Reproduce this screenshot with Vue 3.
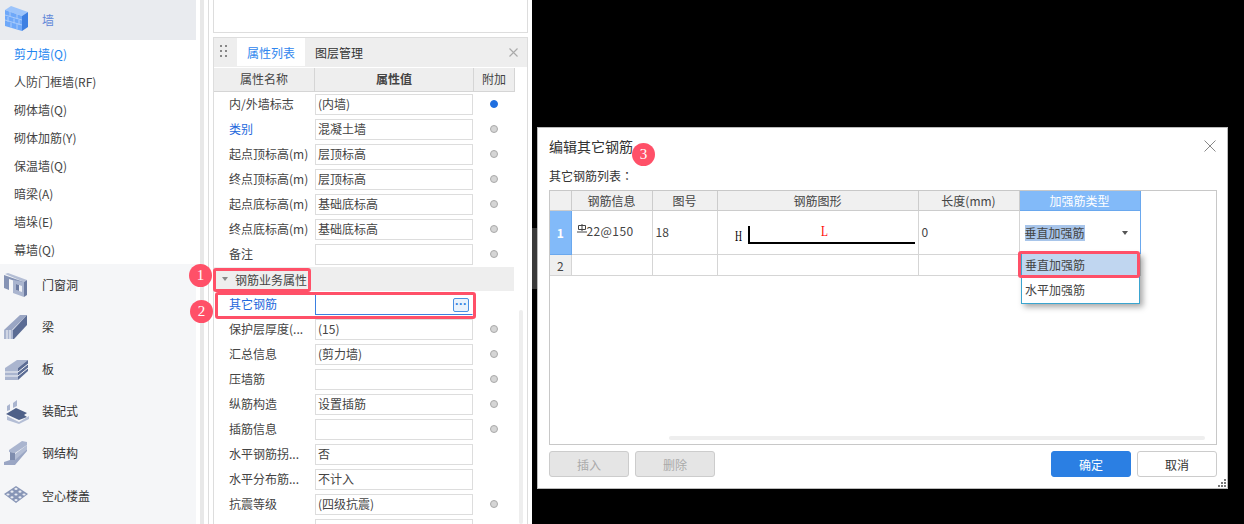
<template>
  <div class="app">
    <nav class="nav">
      <div class="nav-head nav-current">
        <svg class="nav-icon" viewBox="0 0 26 26">
          <polygon points="1,4 7,0 24,6 18,10" fill="#9cc4fb" />
          <polygon points="1,4 18,10 18,25 1,20" fill="#6ea8f9" />
          <polygon points="18,10 24,6 24,21 18,25" fill="#3d7fe2" />
          <path d="M1 9l17 5M1 14l17 5M6 5.500v5M13 8v5M4 11v5M10 12.500v5M15 14v5M7 16.500v5M13 18v5" stroke="#a9cbfb" stroke-width="1" fill="none" />
        </svg>
        <span>墙</span>
      </div>
      <ul class="sub-list">
        <li v-for="(s, i) in wallItems" :key="s" :class="{ active: i === 0 }">{{ s }}</li>
      </ul>
      <div class="nav-rest">
        <div class="nav-head">
          <svg class="nav-icon" viewBox="0 0 26 26">
            <g transform="translate(0 1)">
              <polygon points="1,1 4,0 23,7 20,9" fill="#b4bed5" />
              <polygon points="0,2 20,9 20,11 5,6 5,17 0,15" fill="#8593b5" />
              <polygon points="9,7 20,9 20,24 9,20" fill="#aab5cf" />
              <polygon points="20,9 23,7 23,22 20,24" fill="#6c7ba1" />
              <polygon points="12,11 18,13 18,19 12,17" fill="#eef0f5" />
              <polygon points="12,11 15,12 15,18 12,17" fill="#6c7ba1" />
            </g>
          </svg>
          <span>门窗洞</span>
        </div>
        <div class="nav-head">
          <svg class="nav-icon" viewBox="0 0 26 26">
            <polygon points="0,16 16,1 23,1 8,16" fill="#9aa6c4" />
            <polygon points="9,16 23,1 23,11 10,25 9,25" fill="#5b6c94" />
            <rect x="0" y="16" width="9" height="9" fill="#aab5cf" />
            <path d="M3 16v9M6 16v9" stroke="#f5f6f8" stroke-width="1" />
          </svg>
          <span>梁</span>
        </div>
        <div class="nav-head">
          <svg class="nav-icon" viewBox="0 0 26 26">
            <polygon points="1,12 14,12 24,4 13,4" fill="#aab5cf" />
            <polygon points="1,12 14,12 14,24 1,24" fill="#aab5cf" />
            <polygon points="14,12 24,4 24,15 14,24" fill="#5b6c94" />
            <path d="M1 16h13l10-8M1 20h13l10-8" stroke="#f5f6f8" stroke-width="1" fill="none" />
          </svg>
          <span>板</span>
        </div>
        <div class="nav-head">
          <svg class="nav-icon" viewBox="0 0 26 26">
            <polygon points="3,7 6,5 6,11 3,12" fill="#aab5cf" />
            <polygon points="9,4 13,1 13,7 9,9" fill="#aab5cf" />
            <polygon points="2,15 12,9 23,14 20,16 23,18 15,21" fill="#4e6088" />
            <polygon points="3,17 15,23 25,17 25,20 15,25 3,21" fill="#b4bed5" />
          </svg>
          <span>装配式</span>
        </div>
        <div class="nav-head">
          <svg class="nav-icon" viewBox="0 0 26 26">
            <polygon points="5,9 18,0 23,1 23,4 11,12 5,11" fill="#aab5cf" />
            <polygon points="6,11 11,12 11,20 6,20" fill="#7f8dae" />
            <polygon points="11,13 23,4 23,8 11,20" fill="#b4bed5" />
            <polygon points="0,21 6,19 11,19 23,8 23,10 11,24 0,24" fill="#9aa6c4" />
          </svg>
          <span>钢结构</span>
        </div>
        <div class="nav-head">
          <svg class="nav-icon" viewBox="0 0 26 26">
            <polygon points="0,11 12,3 24,11 12,20" fill="#8795b6" />
            <g fill="#e8ebf2">
              <ellipse v-for="h in holes" :key="h[0] + '-' + h[1]" :cx="h[0]" :cy="h[1]" rx="1.600" ry="1.100" />
            </g>
          </svg>
          <span>空心楼盖</span>
        </div>
      </div>
    </nav>

    <div class="gutter"></div>
    <div class="rule"></div>

    <section class="props-col">
      <div class="top-box"></div>
      <div class="panel">
        <div class="tabs">
          <span class="grip"><i v-for="n in 6" :key="n"></i></span>
          <span class="tab on">属性列表</span>
          <span class="tab">图层管理</span>
          <svg class="tab-close" viewBox="0 0 9 9"><path d="M.5.500l8 8M8.500.500l-8 8" stroke="#aaa" stroke-width="1.100" /></svg>
        </div>
        <div class="col-head">
          <span class="c-name">属性名称</span>
          <span class="c-val">属性值</span>
          <span class="c-add">附加</span>
        </div>
        <template v-for="r in props" :key="r.name">
          <div v-if="r.group" class="group"><i class="caret"></i>{{ r.name }}</div>
          <div v-else class="row">
            <span class="label" :class="{ link: r.link }">{{ r.name }}</span>
            <span class="input" :class="{ focus: r.focus }">
              {{ r.value }}
              <b v-if="r.focus" class="more">···</b>
            </span>
            <span class="add">
              <i v-if="r.dot" class="dot" :class="{ blue: r.dot === 2 }"></i>
            </span>
          </div>
        </template>
        <div class="panel-scroll"></div>
      </div>
    </section>

    <main class="stage">
      <div class="stage-edge"></div>
      <div class="dialog">
        <div class="dlg-title">
          <span>编辑其它钢筋</span>
          <svg class="dlg-close" viewBox="0 0 12 12"><path d="M.5.500l11 11M11.500.500l-11 11" stroke="#888" stroke-width="1" /></svg>
        </div>
        <div class="dlg-label">其它钢筋列表<span class="colon">：</span></div>
        <div class="grid-wrap">
          <table class="grid">
            <colgroup>
              <col class="w-h" /><col class="w-a" /><col class="w-b" />
              <col class="w-c" /><col class="w-d" /><col class="w-e" />
            </colgroup>
            <thead>
              <tr>
                <th></th><th>钢筋信息</th><th>图号</th><th>钢筋图形</th><th>长度(mm)</th>
                <th class="head-on">加强筋类型</th>
              </tr>
            </thead>
            <tbody>
              <tr class="tall">
                <td class="idx idx-on">1</td>
                <td class="rebar">
                  <svg class="bar-mark" viewBox="0 0 10 9">
                    <path d="M1.500 1.500h7v4h-7zM5 0v7M0 8h10" stroke="#444" stroke-width="1" fill="none" />
                  </svg><span class="bar-text">22@150</span>
                </td>
                <td class="up">18</td>
                <td class="shape">
                  <svg width="200" height="43" viewBox="0 0 200 43">
                    <text x="17" y="30" class="sh-h" textLength="7" lengthAdjust="spacingAndGlyphs">H</text>
                    <text x="103" y="25" class="sh-l" textLength="7" lengthAdjust="spacingAndGlyphs">L</text>
                    <path d="M31 15v17h166" stroke="#000" stroke-width="2" fill="none" />
                  </svg>
                </td>
                <td class="up">0</td>
                <td class="edit">
                  <span class="sel">垂直加强筋</span>
                  <i class="caret caret-dark"></i>
                </td>
              </tr>
              <tr>
                <td class="idx">2</td><td></td><td></td><td></td><td></td><td></td>
              </tr>
            </tbody>
          </table>
          <div class="grid-scroll"></div>
          <ul class="dropdown">
            <li class="picked">垂直加强筋</li>
            <li>水平加强筋</li>
          </ul>
        </div>
        <div class="dlg-foot">
          <button class="btn off">插入</button>
          <button class="btn off">删除</button>
          <span class="spacer"></span>
          <button class="btn primary">确定</button>
          <button class="btn">取消</button>
        </div>
        <span class="resize"><i v-for="n in 6" :key="n"></i></span>
      </div>
    </main>

    <div class="mark box-1"></div>
    <div class="mark box-2"></div>
    <div class="mark box-3"></div>
    <span class="badge badge-1">1</span>
    <span class="badge badge-2">2</span>
    <span class="badge badge-3">3</span>
  </div>
</template>

<script setup>
const wallItems = [
  "剪力墙(Q)",
  "人防门框墙(RF)",
  "砌体墙(Q)",
  "砌体加筋(Y)",
  "保温墙(Q)",
  "暗梁(A)",
  "墙垛(E)",
  "幕墙(Q)",
];

// hollow slab holes, 3x3 on an isometric grid
const holes = [];
for (const i of [-1, 0, 1]) {
  for (const j of [-1, 0, 1]) {
    holes.push([12 + (i + j) * 4, 11.5 + (j - i) * 2.8]);
  }
}

const props = [
  { name: "内/外墙标志", value: "(内墙)", dot: 2 },
  { name: "类别", value: "混凝土墙", dot: 1, link: true },
  { name: "起点顶标高(m)", value: "层顶标高", dot: 1 },
  { name: "终点顶标高(m)", value: "层顶标高", dot: 1 },
  { name: "起点底标高(m)", value: "基础底标高", dot: 1 },
  { name: "终点底标高(m)", value: "基础底标高", dot: 1 },
  { name: "备注", value: "", dot: 1 },
  { name: "钢筋业务属性", group: true },
  { name: "其它钢筋", value: "", link: true, focus: true },
  { name: "保护层厚度(...", value: "(15)", dot: 1 },
  { name: "汇总信息", value: "(剪力墙)", dot: 1 },
  { name: "压墙筋", value: "", dot: 1 },
  { name: "纵筋构造", value: "设置插筋", dot: 1 },
  { name: "插筋信息", value: "", dot: 1 },
  { name: "水平钢筋拐...", value: "否" },
  { name: "水平分布筋...", value: "不计入" },
  { name: "抗震等级", value: "(四级抗震)", dot: 1 },
  { name: " ", value: "" },
];
</script>

<style>
body {
  background: #fff;
}
</style>

<style scoped>
.app {
  position: relative;
  display: flex;
  width: 1244px;
  height: 524px;
  overflow: hidden;
  background: #fff;
  font-family: "Noto Sans CJK SC", "Liberation Sans", sans-serif;
  font-size: 12px;
  color: #444;
}
i {
  display: block;
}

/* left nav */
.nav {
  width: 196px;
  flex: none;
  display: flex;
  flex-direction: column;
}
.nav-head {
  height: 42.2px;
  display: flex;
  align-items: center;
  padding-left: 4px;
  color: #333;
}
.nav-head span {
  margin-left: 12px;
  padding-bottom: 2px;
}
.nav-icon {
  width: 26px;
  height: 26px;
  flex: none;
}
.nav-current {
  height: 40px;
  background: #e9ebef;
  color: #5f86d8;
}
.nav-current .nav-icon {
  margin-top: -2px;
}
.sub-list {
  list-style: none;
  margin: 0;
  padding: 0;
  height: 224px;
}
.sub-list li {
  height: 28px;
  line-height: 28px;
  padding-left: 14px;
  color: #444;
}
.sub-list li.active {
  color: #1f86f0;
}
.nav-rest {
  flex: 1;
  background: #f5f6f8;
}
.gutter {
  flex: none;
  width: 4px;
  margin-left: 4px;
  background: #e8e8e8;
}
.rule {
  flex: none;
  width: 1px;
  margin-left: 4px;
  background: #ddd;
}

/* property panel */
.props-col {
  flex: none;
  width: 315px;
  margin-left: 4px;
}
.top-box {
  height: 33px;
  border: 1px solid #ddd;
  border-top: 0;
  box-sizing: border-box;
}
.panel {
  position: relative;
  margin-top: 4px;
  border: 1px solid #ddd;
  border-bottom: 0;
  height: 487px;
  box-sizing: border-box;
  overflow: hidden;
}
.tabs {
  height: 29px;
  background: #eee;
  display: flex;
  align-items: flex-start;
  position: relative;
}
.grip {
  width: 7px;
  margin: 7px 0 0 6px;
  display: grid;
  grid-template-columns: 2px 2px;
  gap: 3px;
  justify-content: space-between;
}
.grip i {
  width: 2px;
  height: 2px;
  background: #888;
}
.tab {
  height: 28px;
  line-height: 29px;
  padding: 0 10px;
  color: #333;
}
.tab.on {
  width: 68px;
  box-sizing: border-box;
  margin-left: 10px;
  background: #fff;
  color: #2f86ee;
  text-align: center;
}
.tab-close {
  position: absolute;
  right: 9px;
  top: 10px;
  width: 9px;
  height: 9px;
}
.col-head {
  margin-top: 1px;
  width: 301px;
  height: 24px;
  display: flex;
  background: #eee;
  border-bottom: 1px solid #d5d5d5;
  box-sizing: border-box;
  line-height: 22px;
  text-align: center;
  color: #444;
}
.c-name {
  width: 100px;
  border-right: 1px solid #d5d5d5;
}
.c-val {
  width: 158px;
  border-right: 1px solid #d5d5d5;
  font-weight: 700;
}
.c-add {
  flex: 1;
  border-right: 1px solid #d5d5d5;
}
.row {
  height: 25px;
  display: flex;
  align-items: center;
}
.label {
  width: 101px;
  flex: none;
  padding: 0 0 2px 15px;
  box-sizing: border-box;
  white-space: nowrap;
  color: #444;
}
.label.link {
  color: #2468dc;
}
.input {
  position: relative;
  width: 158px;
  height: 21px;
  flex: none;
  box-sizing: border-box;
  border: 1px solid #ddd;
  padding-left: 2px;
  line-height: 17px;
  color: #444;
  background: #fff;
}
.input.focus {
  border-color: transparent transparent #3b7fe0 #3b7fe0;
}
.more {
  position: absolute;
  right: 3px;
  top: 3px;
  width: 16px;
  height: 14px;
  box-sizing: border-box;
  border: 1px solid #4a90e2;
  border-radius: 2px;
  background: #e8f2fc;
  color: #2f7fe0;
  font-family: "Liberation Sans", sans-serif;
  font-size: 12px;
  line-height: 11px;
  text-align: center;
}
.add {
  width: 42px;
  display: flex;
  justify-content: center;
  padding-bottom: 2px;
}
.dot {
  width: 8px;
  height: 8px;
  border-radius: 50%;
  background: #d5d5d5;
  border: 1px solid #aaa;
  box-sizing: border-box;
}
.dot.blue {
  background: #1f6fe0;
  border-color: #1f6fe0;
}
.group {
  width: 300px;
  height: 24px;
  margin-bottom: 1px;
  display: flex;
  align-items: center;
  background: #eee;
  color: #444;
}
.caret {
  width: 0;
  height: 0;
  margin: 0 7px 0 8px;
  border: 3px solid transparent;
  border-top: 4px solid #888;
  border-bottom: 0;
}
.panel-scroll {
  position: absolute;
  left: 305px;
  top: 272px;
  bottom: 0;
  width: 4px;
  border-radius: 2px;
  background: #eee;
}

/* stage and dialog */
.stage {
  flex: 1;
  margin-left: 4px;
  background: #000;
  position: relative;
}
.stage-edge {
  position: absolute;
  left: 0;
  top: 228px;
  width: 5px;
  height: 61px;
  background: #3a3a3a;
}
.dialog {
  position: relative;
  width: 691px;
  height: 362px;
  margin: 127px 0 0 5px;
  box-sizing: border-box;
  border: 1px solid #bbb;
  background: #fff;
  padding: 0 10px 0 11px;
  display: flex;
  flex-direction: column;
  color: #333;
}
.dlg-title {
  height: 36px;
  font-size: 14px;
  line-height: 36px;
  display: flex;
  justify-content: space-between;
  align-items: center;
}
.dlg-close {
  width: 12px;
  height: 12px;
  margin-right: 1px;
}
.dlg-label {
  height: 26px;
  line-height: 22px;
  padding-top: 1px;
  box-sizing: border-box;
}
.colon {
  font-family: "Noto Sans CJK TC", sans-serif;
}
.grid-wrap {
  position: relative;
  width: 668px;
  height: 255px;
  box-sizing: border-box;
  border: 1px solid #c8c8c8;
}
.grid {
  table-layout: fixed;
  width: 590px;
  border-collapse: collapse;
  font-size: 12px;
}
.w-h { width: 21px; }
.w-a { width: 81px; }
.w-b { width: 65px; }
.w-c { width: 201px; }
.w-d { width: 101px; }
.w-e { width: 121px; }
.grid th {
  height: 19px;
  padding: 0;
  font-weight: 400;
  background: #f0f0f0;
  border: 1px solid #ccc;
  border-top: 0;
  color: #444;
}
.grid th:first-child {
  border-left: 0;
}
.grid th.head-on {
  background: #82baf9;
  color: #fff;
  border-color: #6aa8ee;
}
.grid td {
  height: 20px;
  padding: 0 3px;
  border: 1px solid #d5d5d5;
  color: #444;
  overflow: hidden;
  white-space: nowrap;
}
.grid td:first-child {
  border-left: 0;
}
.tall td {
  height: 43px;
}
.grid .tall td.up {
  height: 41px;
  padding-bottom: 2px;
}
.grid .idx {
  padding: 0;
  text-align: center;
  background: #efefef;
}
.grid .idx-on {
  background: #82baf9;
  color: #fff;
  font-weight: 700;
  border: 1px solid #6aa8ee;
}
.grid .tall td.rebar {
  height: 39px;
  padding: 0 0 4px 5px;
}
.bar-mark {
  width: 10px;
  height: 9px;
  vertical-align: 3px;
}
.bar-text {
  letter-spacing: 0.4px;
}
.grid td.shape {
  padding: 0;
}
.shape svg {
  display: block;
}
.sh-h {
  font-family: "Liberation Serif", serif;
  font-size: 14px;
  fill: #000;
}
.sh-l {
  font-family: "Liberation Serif", serif;
  font-size: 14px;
  fill: #f00;
}
.grid td.edit {
  position: relative;
  padding-left: 5px;
  border: 1px solid #6aa8ee;
  border-bottom-color: #d5d5d5;
}
.sel {
  background: #a8c5ea;
  line-height: 16px;
  display: inline-block;
}
.caret-dark {
  position: absolute;
  right: 12px;
  top: 20px;
  margin: 0;
  border-top-color: #555;
}
.grid-scroll {
  position: absolute;
  left: 119px;
  right: 11px;
  top: 245px;
  height: 4px;
  border-radius: 2px;
  background: #eee;
}
.dropdown {
  list-style: none;
  position: absolute;
  left: 471px;
  top: 62px;
  width: 119px;
  margin: 0;
  padding: 0;
  box-sizing: border-box;
  border: 1px solid #3aa5d0;
  border-top: 0;
  background: #fff;
  box-shadow: 3px 3px 6px rgba(0, 0, 0, 0.35);
}
.dropdown li {
  height: 25px;
  line-height: 24px;
  padding-left: 3px;
  color: #444;
}
.dropdown li.picked {
  background: #c0d6f0;
}
.dlg-foot {
  margin-top: 6px;
  display: flex;
  gap: 6px;
}
.spacer {
  flex: 1;
}
.btn {
  width: 80px;
  height: 26px;
  padding: 0;
  box-sizing: border-box;
  border: 1px solid #ccc;
  border-radius: 3px;
  background: #fff;
  color: #333;
  font-family: inherit;
  font-size: 12px;
}
.btn.off {
  background: #e5e5e5;
  color: #aaa;
}
.btn.primary {
  background: #2b7fe3;
  border-color: #2b7fe3;
  color: #fff;
}
.resize {
  position: absolute;
  right: 1px;
  bottom: 1px;
  width: 8px;
  height: 8px;
  display: grid;
  grid-template-columns: repeat(3, 2px);
  gap: 1px;
}
.resize i {
  width: 2px;
  height: 2px;
  background: #777;
}
.resize i:nth-child(1) { grid-column: 3; }
.resize i:nth-child(2) { grid-column: 2; }
.resize i:nth-child(4) { grid-column: 1; }

/* annotations */
.mark {
  position: absolute;
  box-sizing: border-box;
  border: 3px solid #ff5068;
  border-radius: 3px;
}
.box-1 {
  left: 213px;
  top: 268px;
  width: 98px;
  height: 24px;
}
.box-2 {
  left: 215px;
  top: 292px;
  width: 261px;
  height: 27px;
}
.box-3 {
  left: 1018px;
  top: 251px;
  width: 122px;
  height: 27px;
}
.badge {
  position: absolute;
  width: 23px;
  height: 23px;
  border-radius: 50%;
  background: #ff5068;
  color: #fff;
  font-family: "Liberation Serif", serif;
  font-size: 15px;
  line-height: 23px;
  text-align: center;
}
.badge-1 {
  left: 189px;
  top: 264px;
}
.badge-2 {
  left: 190px;
  top: 300px;
}
.badge-3 {
  left: 632px;
  top: 143px;
}
</style>
